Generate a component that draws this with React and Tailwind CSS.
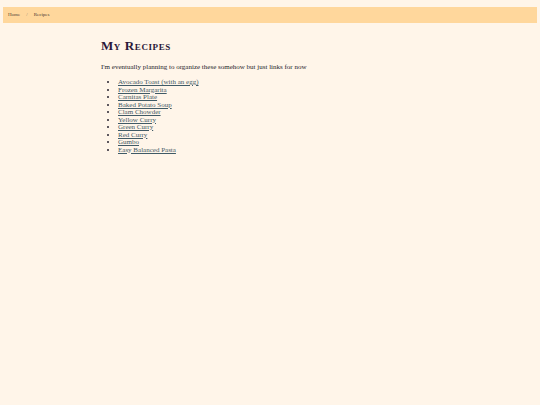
import React from "react";

const recipes = [
  "Avocado Toast (with an egg)",
  "Frozen Margarita",
  "Carnitas Plate",
  "Baked Potato Soup",
  "Clam Chowder",
  "Yellow Curry",
  "Green Curry",
  "Red Curry",
  "Gumbo",
  "Easy Balanced Pasta",
];

export default function App() {
  return (
    <div className="min-h-[405px] bg-[#fff5e9] pt-[7px] font-['Liberation_Serif',serif] text-[#2a2330]">
      <nav className="mx-[3px] flex h-[16px] items-center gap-[4px] bg-[#ffd79c] px-[5px] text-[5px] text-[#4a3a34]">
        <a href="#" className="hover:underline">Home</a>
        <span className="px-[2px] text-[#8a7a70]">/</span>
        <span>Recipes</span>
      </nav>

      <main className="mx-auto w-[338px] pt-[15px]">
        <h1 className="text-[13px] font-bold leading-[16px] tracking-[0.6px] text-[#2b1838] [font-variant:small-caps]">
          My Recipes
        </h1>
        <p className="mt-[9px] text-[7px] leading-[9px] text-[#241d2a]">
          I'm eventually planning to organize these somehow but just links for now
        </p>
        <ul className="mt-[7px] list-disc pl-[17px] text-[7px] leading-[7.5px] marker:text-[#2a2330]">
          {recipes.map((name) => (
            <li key={name}>
              <a href="#" className="text-[#3f5a66] underline">
                {name}
              </a>
            </li>
          ))}
        </ul>
      </main>
    </div>
  );
}
